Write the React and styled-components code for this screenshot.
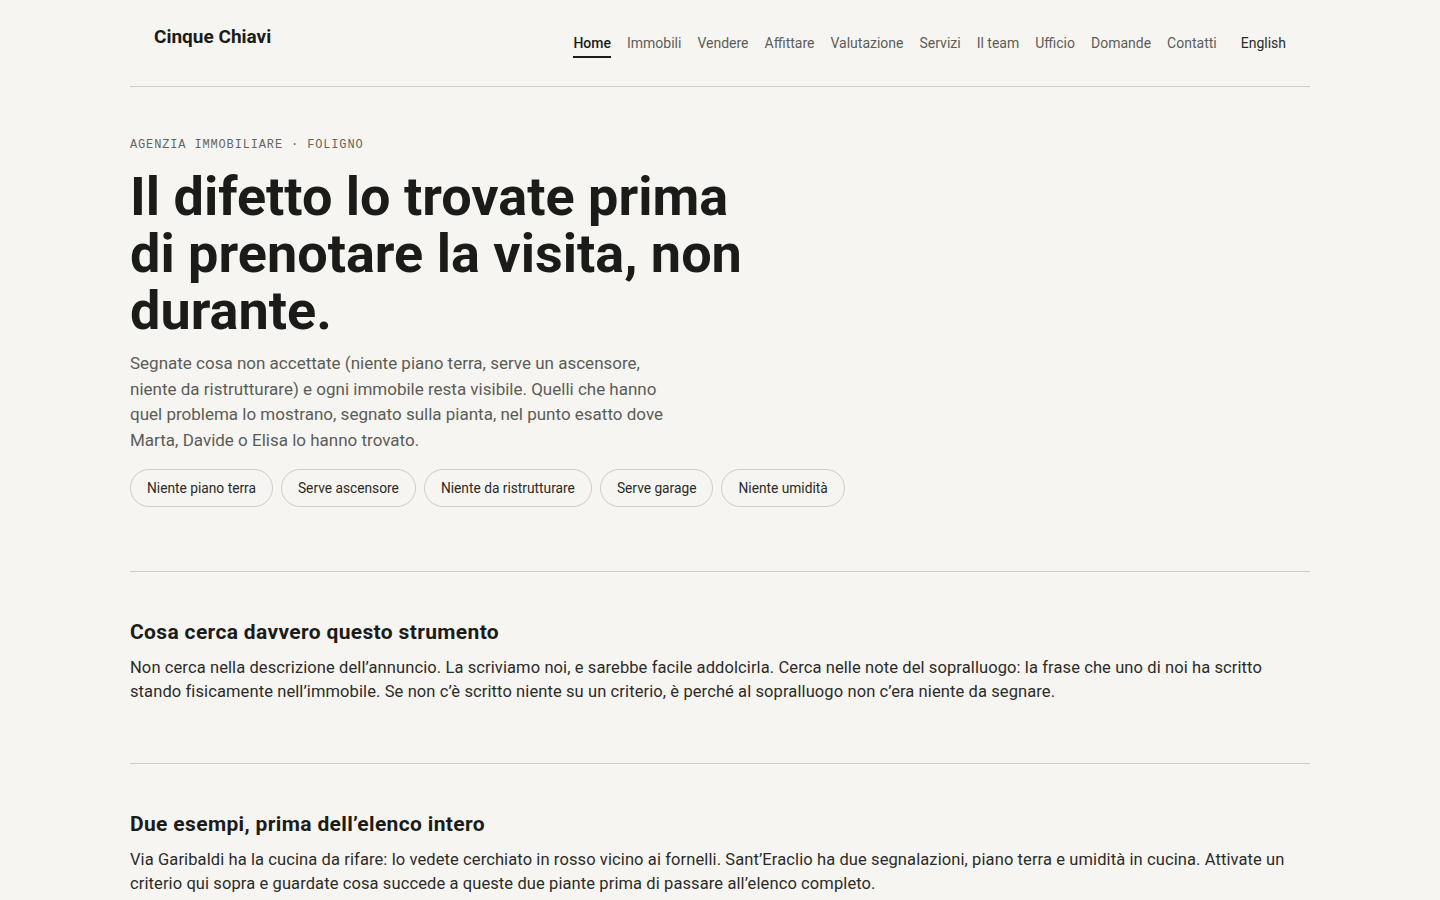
import React from "react";
import styled, { createGlobalStyle } from "styled-components";

const GlobalStyle = createGlobalStyle`
  html, body { margin: 0; padding: 0; }
  body {
    background: #f6f5f1;
    color: #1b1c19;
    font-family: Roboto, "Liberation Sans", Arial, sans-serif;
    -webkit-font-smoothing: antialiased;
  }
  * { box-sizing: border-box; }
`;

const Page = styled.div`
  width: 1180px;
  margin: 0 auto;
`;

const Header = styled.header`
  display: flex;
  justify-content: space-between;
  align-items: flex-start;
  padding: 24px 24px 28px;
  border-bottom: 1px solid #cfcdc8;
`;

const Logo = styled.a`
  font-size: 19px;
  line-height: 26px;
  font-weight: 700;
  color: #1b1c19;
  text-decoration: none;
`;

const Nav = styled.nav`
  display: flex;
  gap: 16px;
  align-items: flex-start;
`;

const NavLink = styled.a`
  font-size: 14px;
  line-height: 20px;
  padding: 9px 0 3px;
  text-decoration: none;
  color: ${(p) => (p.$active ? "#1b1c19" : "#5d5d58")};
  font-weight: ${(p) => (p.$active ? 500 : 400)};
  border-bottom: 2px solid ${(p) => (p.$active ? "#1b1c19" : "transparent")};
`;

const LangLink = styled(NavLink)`
  margin-left: 8px;
  color: #2b2b28;
`;

const Hero = styled.section`
  padding: 50px 0 64px;
`;

const Eyebrow = styled.div`
  font-family: "Liberation Mono", "DejaVu Sans Mono", monospace;
  font-size: 12px;
  line-height: 16px;
  letter-spacing: 0.85px;
  color: #66665f;
  margin-bottom: 15px;
`;

const Title = styled.h1`
  margin: 0;
  max-width: 640px;
  font-size: 54px;
  line-height: 57px;
  font-weight: 700;
  letter-spacing: 0;
  color: #1b1c19;
`;

const Lead = styled.p`
  margin: 12px 0 0;
  max-width: 556px;
  font-size: 17px;
  line-height: 25.5px;
  color: #5c5c57;
`;

const Chips = styled.div`
  display: flex;
  flex-wrap: wrap;
  gap: 8px;
  margin-top: 16px;
`;

const Chip = styled.button`
  height: 38px;
  padding: 0 16px;
  border: 1px solid #cfcdc7;
  border-radius: 999px;
  background: transparent;
  font-family: inherit;
  font-size: 13.75px;
  color: #2a2a27;
  cursor: pointer;
`;

const Section = styled.section`
  border-top: 1px solid #cfcdc8;
  padding: 46px 0 59px;
`;

const SectionTitle = styled.h2`
  margin: 0 0 10px;
  font-size: 21px;
  line-height: 28px;
  font-weight: 700;
  letter-spacing: 0.35px;
  color: #1b1c19;
`;

const Body = styled.p`
  margin: 0;
  font-size: 16.5px;
  line-height: 24px;
  letter-spacing: 0.1px;
  color: #2b2b28;
`;

const navItems = [
  "Home",
  "Immobili",
  "Vendere",
  "Affittare",
  "Valutazione",
  "Servizi",
  "Il team",
  "Ufficio",
  "Domande",
  "Contatti",
];

const chips = [
  "Niente piano terra",
  "Serve ascensore",
  "Niente da ristrutturare",
  "Serve garage",
  "Niente umidità",
];

export default function App() {
  return (
    <>
      <GlobalStyle />
      <Page>
        <Header>
          <Logo href="#">Cinque Chiavi</Logo>
          <Nav>
            {navItems.map((item, i) => (
              <NavLink key={item} href="#" $active={i === 0}>
                {item}
              </NavLink>
            ))}
            <LangLink href="#">English</LangLink>
          </Nav>
        </Header>

        <Hero>
          <Eyebrow>AGENZIA IMMOBILIARE · FOLIGNO</Eyebrow>
          <Title>Il difetto lo trovate prima di prenotare la visita, non durante.</Title>
          <Lead>
            Segnate cosa non accettate (niente piano terra, serve un ascensore, niente da
            ristrutturare) e ogni immobile resta visibile. Quelli che hanno quel problema lo
            mostrano, segnato sulla pianta, nel punto esatto dove Marta, Davide o Elisa lo
            hanno trovato.
          </Lead>
          <Chips>
            {chips.map((c) => (
              <Chip key={c}>{c}</Chip>
            ))}
          </Chips>
        </Hero>

        <Section>
          <SectionTitle>Cosa cerca davvero questo strumento</SectionTitle>
          <Body>
            Non cerca nella descrizione dell’annuncio. La scriviamo noi, e sarebbe facile
            addolcirla. Cerca nelle note del sopralluogo: la frase che uno di noi ha scritto
            stando fisicamente nell’immobile. Se non c’è scritto niente su un criterio, è
            perché al sopralluogo non c’era niente da segnare.
          </Body>
        </Section>

        <Section>
          <SectionTitle>Due esempi, prima dell’elenco intero</SectionTitle>
          <Body>
            Via Garibaldi ha la cucina da rifare: lo vedete cerchiato in rosso vicino ai
            fornelli. Sant’Eraclio ha due segnalazioni, piano terra e umidità in cucina.
            Attivate un criterio qui sopra e guardate cosa succede a queste due piante prima
            di passare all’elenco completo.
          </Body>
        </Section>
      </Page>
    </>
  );
}
